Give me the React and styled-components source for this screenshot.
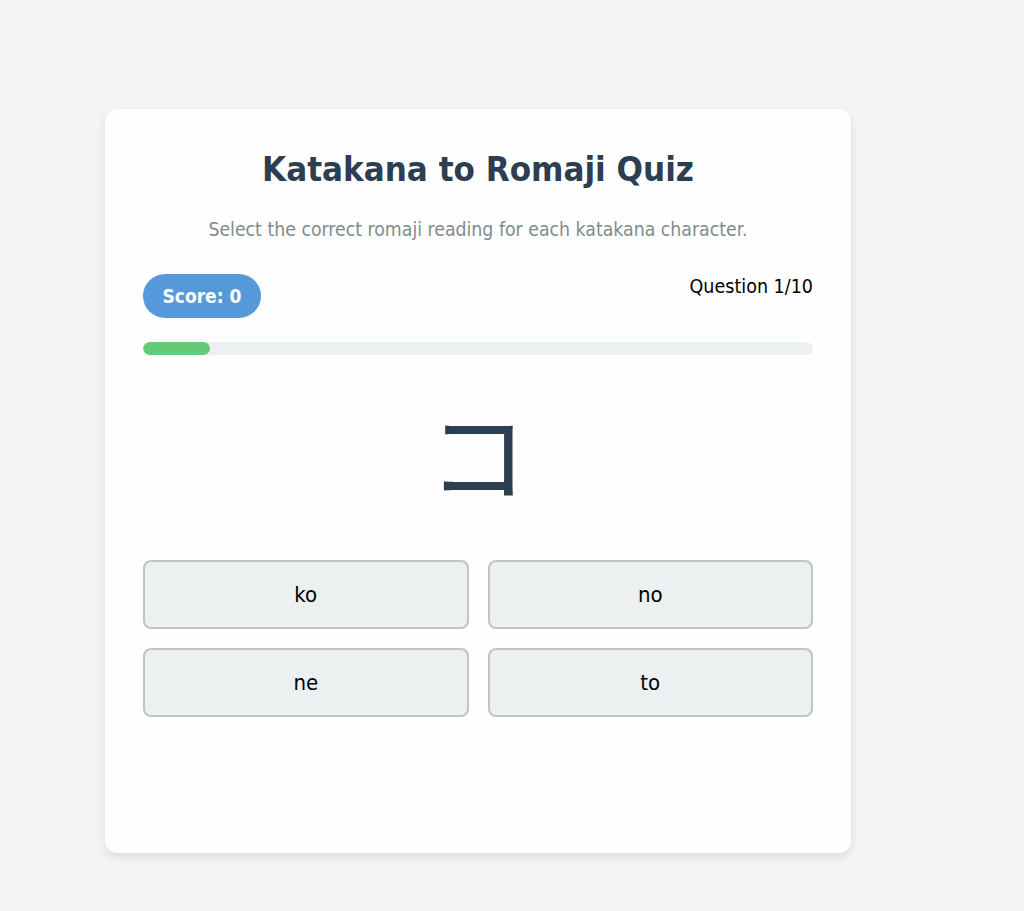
import React from "react";
import styled, { createGlobalStyle } from "styled-components";

const Global = createGlobalStyle`
  html, body { margin: 0; padding: 0; background: #f4f4f4; }
  body { font-family: "DejaVu Sans Condensed", "DejaVu Sans", sans-serif; }
`;

const Page = styled.div`
  min-height: 911px;
  padding: 109px 0 0 105px;
  box-sizing: border-box;
`;

const Card = styled.div`
  width: 746px;
  height: 744px;
  box-sizing: border-box;
  background: #fefefe;
  border-radius: 12px;
  box-shadow: 0 4px 10px rgba(0, 0, 0, 0.1);
  padding: 38px 38px;
  display: flex;
  flex-direction: column;
`;

const Title = styled.h1`
  margin: 0;
  text-align: center;
  font-size: 34.6px;
  font-weight: bold;
  color: #2c3e50;
  line-height: 44px;
`;

const Subtitle = styled.p`
  margin: 27px 0 0;
  text-align: center;
  font-size: 19.3px;
  color: #7f8c8d;
  line-height: 24px;
`;

const StatusRow = styled.div`
  margin-top: 32px;
  display: flex;
  justify-content: space-between;
  align-items: flex-start;
`;

const ScorePill = styled.div`
  background: #5599da;
  color: #fff;
  font-weight: bold;
  font-size: 19px;
  height: 44px;
  padding: 0 19.5px;
  border-radius: 22px;
  display: flex;
  align-items: center;
`;

const Counter = styled.div`
  font-size: 19.5px;
  color: #000;
  line-height: 24px;
  margin-top: 1px;
`;

const Track = styled.div`
  margin-top: 24px;
  height: 13px;
  border-radius: 7px;
  background: #ecf0f1;
  overflow: hidden;
`;

const Fill = styled.div`
  height: 100%;
  background: #66c975;
  border-radius: 7px;
`;

const Character = styled.div`
  margin-top: 41px;
  text-align: center;
  font-size: 100px;
  line-height: 110px;
  color: #2c3e50;
  font-family: "Noto Sans CJK JP", sans-serif;
`;

const Options = styled.div`
  margin-top: 54px;
  display: grid;
  grid-template-columns: 1fr 1fr;
  gap: 19px 19px;
`;

const Option = styled.button`
  height: 69px;
  background: #ecf0f1;
  border: 2px solid #bfc4c7;
  border-radius: 8px;
  font-family: inherit;
  font-size: 22px;
  color: #000;
  cursor: pointer;
`;

export default function App() {
  const options = ["ko", "no", "ne", "to"];
  return (
    <Page>
      <Global />
      <Card>
        <Title>Katakana to Romaji Quiz</Title>
        <Subtitle>Select the correct romaji reading for each katakana character.</Subtitle>
        <StatusRow>
          <ScorePill>Score: 0</ScorePill>
          <Counter>Question 1/10</Counter>
        </StatusRow>
        <Track>
          <Fill style={{ width: "10%" }} />
        </Track>
        <Character>コ</Character>
        <Options>
          {options.map((o) => (
            <Option key={o}>{o}</Option>
          ))}
        </Options>
      </Card>
    </Page>
  );
}
